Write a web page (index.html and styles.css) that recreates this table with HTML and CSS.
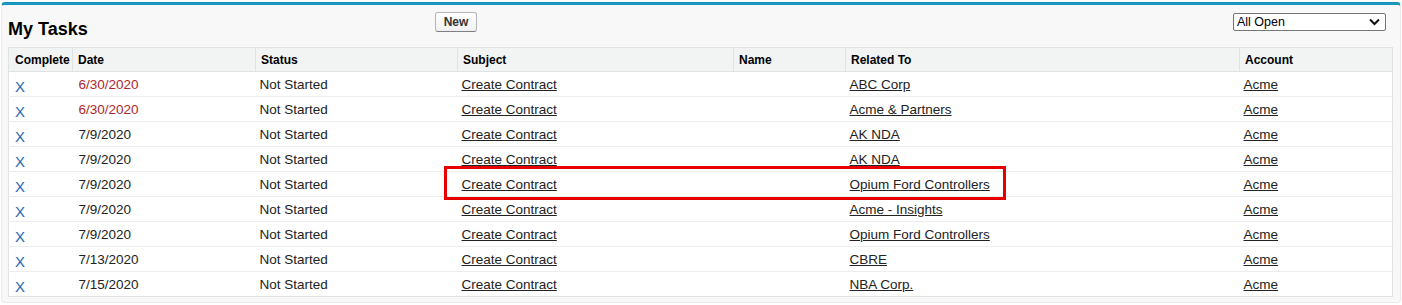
FILE: index.html
```html
<!DOCTYPE html>
<html>
<head>
<meta charset="utf-8">
<link rel="stylesheet" href="styles.css">
</head>
<body>
<div class="panel">
  <div class="panel-head">
    <h2 class="title">My Tasks</h2>
    <button class="btn">New</button>
    <div class="select">
      <span>All Open</span>
      <svg width="11" height="8" viewBox="0 0 11 8"><path d="M1 1.5 L5.5 6 L10 1.5" fill="none" stroke="#111" stroke-width="2"/></svg>
    </div>
  </div>
  <div class="table-wrap">
    <table class="tasks">
      <colgroup>
        <col class="c1"><col class="c2"><col class="c3"><col class="c4"><col class="c5"><col class="c6"><col class="c7">
      </colgroup>
      <thead>
        <tr><th>Complete</th><th>Date</th><th>Status</th><th>Subject</th><th>Name</th><th>Related To</th><th>Account</th></tr>
      </thead>
      <tbody>
        <tr><td class="x">X</td><td class="date overdue">6/30/2020</td><td>Not Started</td><td><a>Create Contract</a></td><td></td><td><a>ABC Corp</a></td><td><a>Acme</a></td></tr>
        <tr><td class="x">X</td><td class="date overdue">6/30/2020</td><td>Not Started</td><td><a>Create Contract</a></td><td></td><td><a>Acme &amp; Partners</a></td><td><a>Acme</a></td></tr>
        <tr><td class="x">X</td><td class="date">7/9/2020</td><td>Not Started</td><td><a>Create Contract</a></td><td></td><td><a>AK NDA</a></td><td><a>Acme</a></td></tr>
        <tr><td class="x">X</td><td class="date">7/9/2020</td><td>Not Started</td><td><a>Create Contract</a></td><td></td><td><a>AK NDA</a></td><td><a>Acme</a></td></tr>
        <tr><td class="x">X</td><td class="date">7/9/2020</td><td>Not Started</td><td><a>Create Contract</a></td><td></td><td><a>Opium Ford Controllers</a></td><td><a>Acme</a></td></tr>
        <tr><td class="x">X</td><td class="date">7/9/2020</td><td>Not Started</td><td><a>Create Contract</a></td><td></td><td><a>Acme - Insights</a></td><td><a>Acme</a></td></tr>
        <tr><td class="x">X</td><td class="date">7/9/2020</td><td>Not Started</td><td><a>Create Contract</a></td><td></td><td><a>Opium Ford Controllers</a></td><td><a>Acme</a></td></tr>
        <tr><td class="x">X</td><td class="date">7/13/2020</td><td>Not Started</td><td><a>Create Contract</a></td><td></td><td><a>CBRE</a></td><td><a>Acme</a></td></tr>
        <tr><td class="x">X</td><td class="date">7/15/2020</td><td>Not Started</td><td><a>Create Contract</a></td><td></td><td><a>NBA Corp.</a></td><td><a>Acme</a></td></tr>
      </tbody>
    </table>
    <div class="highlight"></div>
  </div>
</div>
</body>
</html>
```

FILE: styles.css
```css
html, body {
  margin: 0;
  padding: 0;
  background: #ffffff;
}
body {
  font-family: Arial, "Liberation Sans", sans-serif;
  color: #222;
}
.panel {
  margin: 2px 1px 0 1px;
  height: 301px;
  box-sizing: border-box;
  background: #f8f8f8;
  border: 1px solid #eaeaea;
  border-top: 3px solid #1797c0;
  border-radius: 4px;
  padding: 0 7px 0 6px;
}
.panel-head {
  height: 42px;
  position: relative;
  display: flex;
  align-items: center;
}
.title {
  margin: 6px 0 0 0;
  font-size: 18px;
  font-weight: bold;
  color: #000;
}
.btn {
  position: absolute;
  left: 427px;
  top: 7px;
  height: 20px;
  width: 42px;
  padding: 0;
  font-family: Arial, "Liberation Sans", sans-serif;
  font-size: 12px;
  font-weight: bold;
  color: #333;
  background: linear-gradient(#ffffff, #f0f0f0);
  border: 1px solid #b5b5b5;
  border-bottom-color: #7f7f7f;
  border-radius: 3px;
}
.select {
  position: absolute;
  left: 1225px;
  top: 8px;
  width: 153px;
  height: 18px;
  box-sizing: border-box;
  border: 1px solid #767676;
  border-radius: 2px;
  background: #fff;
  display: flex;
  align-items: center;
  justify-content: space-between;
  padding: 0 5px 0 3px;
  font-size: 12.5px;
  color: #000;
}
.table-wrap {
  position: relative;
}
.tasks {
  width: 1385px;
  border-collapse: collapse;
  table-layout: fixed;
  background: #fff;
  border: 1px solid #e0e3e5;
  font-size: 13.5px;
}
.c1 { width: 64px; }
.c2 { width: 183px; }
.c3 { width: 202px; }
.c4 { width: 276px; }
.c5 { width: 112px; }
.c6 { width: 394px; }
.c7 { width: 153px; }
.tasks thead tr {
  height: 24px;
}
.tasks th {
  background: #f2f3f3;
  padding: 0 5px;
  line-height: 16px;
  text-align: left;
  font-size: 12px;
  font-weight: bold;
  color: #000;
  border-right: 1px solid #e0e3e5;
  border-bottom: 1px solid #e0e3e5;
}
.tasks th:first-child {
  padding: 0 2px 0 6px;
}
.tasks tbody tr {
  height: 25px;
}
.tasks td {
  padding: 2px 4px 0 4px;
  line-height: 16px;
  border-bottom: 1px solid #ededed;
  white-space: nowrap;
  color: #222;
  vertical-align: middle;
}
.tasks tr:last-child td {
  border-bottom: none;
}
.tasks td.x {
  color: #1b6ab7;
  font-size: 15px;
  padding-left: 6px;
  padding-top: 5px;
}
.tasks td.date {
  padding-left: 6px;
}
.tasks td.overdue {
  color: #b0262b;
}
.tasks a {
  color: #222;
  text-decoration: underline;
}
.highlight {
  position: absolute;
  left: 436px;
  top: 119px;
  width: 562px;
  height: 34px;
  box-sizing: border-box;
  border: 3px solid #e60000;
}
```
